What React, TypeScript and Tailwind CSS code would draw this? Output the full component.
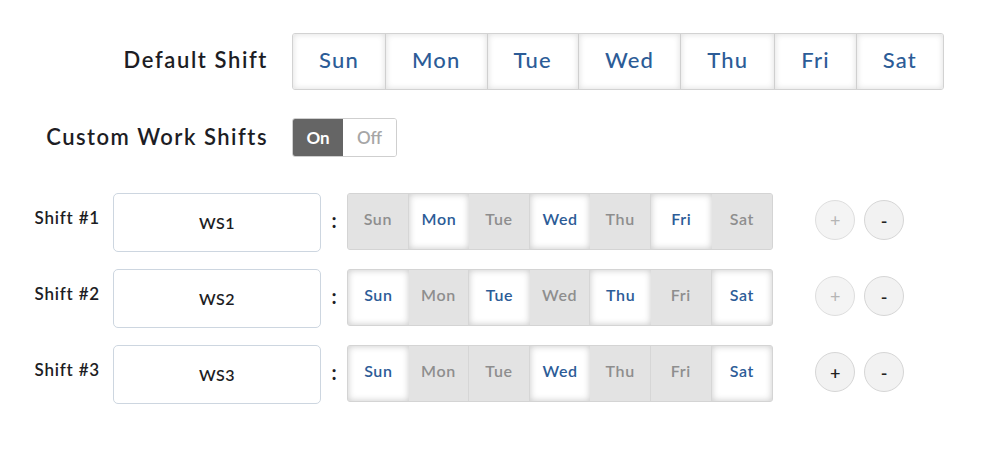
const defaultDays = ["Sun", "Mon", "Tue", "Wed", "Thu", "Fri", "Sat"];

const shifts = [
  { label: "Shift #1", name: "WS1", days: [false, true, false, true, false, true, false], canAdd: false },
  { label: "Shift #2", name: "WS2", days: [true, false, true, false, true, false, true], canAdd: false },
  { label: "Shift #3", name: "WS3", days: [true, false, false, true, false, false, true], canAdd: true },
];

function DayCell({ day, on }: { day: string; on: boolean }) {
  return (
    <div
      className={
        on
          ? "flex h-full w-[60.6px] items-center justify-center bg-white pb-[5px] text-[16px] font-semibold tracking-[0.6px] text-[#2c5c97] shadow-[inset_0_0_7px_rgba(0,0,0,0.22)]"
          : "flex h-full w-[60.6px] items-center justify-center border-r border-[#d6d6d6] bg-[#e3e3e3] pb-[5px] text-[16px] font-semibold tracking-[0.6px] text-[#8e8e8e] last:border-r-0"
      }
    >
      {day}
    </div>
  );
}

export default function App() {
  return (
    <div className="h-[452px] w-[982px] bg-white font-['Lato',sans-serif] text-[#1d1d24]">
      <div className="flex flex-col pt-[33px]">
        <div className="flex items-center gap-6">
          <div className="w-[268px] pb-[5px] text-right text-[22px] font-semibold tracking-[1.6px]">Default Shift</div>
          <div className="flex h-[57px] overflow-hidden rounded-[3px] border border-[#d2d2d2]">
            {defaultDays.map((d) => (
              <div
                key={d}
                className="flex items-center justify-center border-r border-[#cfcfcf] bg-white px-[26px] pb-[5px] text-[22px] font-medium tracking-[1.2px] text-[#2c5c97] shadow-[inset_0_0_6px_rgba(0,0,0,0.14)] last:border-r-0"
              >
                {d}
              </div>
            ))}
          </div>
        </div>

        <div className="mt-[28px] flex items-center gap-6">
          <div className="w-[268px] pb-[3px] text-right text-[22px] font-semibold tracking-[1.5px]">Custom Work Shifts</div>
          <div className="flex h-[39px] overflow-hidden rounded-[3px] border border-[#cfcfcf] text-[17px] font-semibold">
            <div className="flex w-[50px] items-center justify-center bg-[#656565] font-bold text-white">On</div>
            <div className="flex w-[53px] items-center justify-center bg-white text-[#a6a6a6]">Off</div>
          </div>
        </div>

        <div className="mt-[36px] flex flex-col gap-[17px]">
          {shifts.map((s) => (
            <div key={s.name} className="flex items-start">
              <div className="w-[100px] pt-[12px] text-right text-[17px] font-semibold tracking-[0.8px]">{s.label}</div>
              <div className="ml-[13px] flex h-[59px] w-[208px] items-center justify-center rounded-[5px] border border-[#cdd6e0] text-[16px] font-semibold tracking-[0.5px]">
                {s.name}
              </div>
              <div className="flex h-[56px] w-[26px] items-center justify-center pb-[3px] text-[20px] font-bold">:</div>
              <div className="flex h-[57px] overflow-hidden rounded-[3px] border border-[#d4d4d4] bg-[#e3e3e3]">
                {defaultDays.map((d, i) => (
                  <DayCell key={d} day={d} on={s.days[i]} />
                ))}
              </div>
              <div className="ml-[42px] mt-[7px] flex gap-[9px]">
                <div
                  className={
                    s.canAdd
                      ? "flex h-[40px] w-[40px] items-center justify-center rounded-full border border-[#d6d6d6] bg-[#f2f2f2] text-[18px] font-semibold text-[#222]"
                      : "flex h-[40px] w-[40px] items-center justify-center rounded-full border border-[#dedede] bg-[#f4f4f4] text-[18px] text-[#b5b5b5]"
                  }
                >
                  +
                </div>
                <div className="flex h-[40px] w-[40px] items-center justify-center rounded-full border border-[#d6d6d6] bg-[#f2f2f2] text-[18px] font-semibold text-[#222]">
                  -
                </div>
              </div>
            </div>
          ))}
        </div>
      </div>
    </div>
  );
}
